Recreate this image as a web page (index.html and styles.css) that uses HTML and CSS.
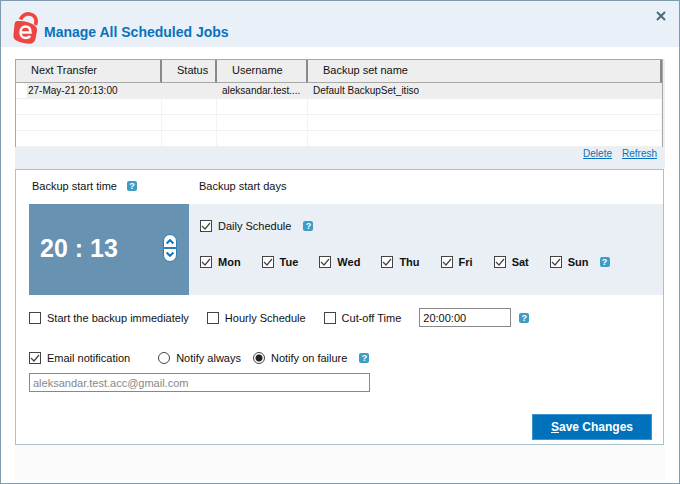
FILE: index.html
```html
<!DOCTYPE html>
<html lang="en">
<head>
  <meta charset="UTF-8">
  <meta name="viewport" content="width=device-width, initial-scale=1.0">
  <title>Manage All Scheduled Jobs</title>
  <link rel="stylesheet" href="styles.css">
</head>
<body>
  <div class="window">
    <header class="header">
      <svg class="logo" viewBox="0 0 26 33" aria-hidden="true">
        <path d="M7.5 8.5 C10 3.5 14 2.2 18 3.4 C22.5 5 24 9 22.5 14" fill="none" stroke="#ee4542" stroke-width="3.6"/>
        <path d="M4 10 C11 9.5 16 11 21 14 Q24.5 16 24 20 L22.5 28 Q21 33 16 32.8 C10 32.5 6 31 2.5 29 Q0 27.5 0.5 23.5 L1.5 13.5 Q2 10.2 4 10 Z" fill="#ee4542"/>
        <path d="M7.5 21.5 L17.5 21.5 C17.5 17.5 15.5 15.5 12.5 15.5 C9.5 15.5 7.5 18 7.5 21.2 C7.5 24.5 9.5 27 12.8 27 C14.8 27 16.2 26.4 17.2 25" fill="none" stroke="#fff" stroke-width="2.5"/>
      </svg>
      <h1>Manage All Scheduled Jobs</h1>
      <button class="close" type="button" aria-label="Close">
        <svg viewBox="0 0 10 10"><path d="M1 1 L9 9 M9 1 L1 9" stroke="#4c6b80" stroke-width="2"/></svg>
      </button>
    </header>

    <main class="content">
      <section class="jobs">
        <table>
          <thead>
            <tr>
              <th class="col-next">Next Transfer</th>
              <th class="col-status">Status</th>
              <th class="col-user">Username</th>
              <th>Backup set name</th>
            </tr>
          </thead>
          <tbody>
            <tr class="selected">
              <td>27-May-21 20:13:00</td>
              <td></td>
              <td>aleksandar.test....</td>
              <td>Default BackupSet_itiso</td>
            </tr>
            <tr><td></td><td></td><td></td><td></td></tr>
            <tr><td></td><td></td><td></td><td></td></tr>
            <tr><td></td><td></td><td></td><td></td></tr>
          </tbody>
        </table>
        <nav class="job-links">
          <a href="#delete">Delete</a>
          <a href="#refresh">Refresh</a>
        </nav>
      </section>

      <form class="panel">
        <div class="labels">
          <div class="label-time">Backup start time <button class="help" type="button">?</button></div>
          <div>Backup start days</div>
        </div>

        <div class="schedule">
          <div class="clock">
            <span class="time">20 : 13</span>
            <div class="spinner">
              <button type="button" aria-label="Later">
                <svg viewBox="0 0 12 12"><path d="M2 9 L6 5 L10 9" fill="none" stroke="#0a72bd" stroke-width="2.4"/></svg>
              </button>
              <button type="button" aria-label="Earlier">
                <svg viewBox="0 0 12 12"><path d="M2 3 L6 7 L10 3" fill="none" stroke="#0a72bd" stroke-width="2.4"/></svg>
              </button>
            </div>
          </div>
          <div class="days">
            <div class="row">
              <label><input type="checkbox" checked>Daily Schedule</label>
              <button class="help" type="button">?</button>
            </div>
            <div class="row weekdays">
              <label><input type="checkbox" checked>Mon</label>
              <label><input type="checkbox" checked>Tue</label>
              <label><input type="checkbox" checked>Wed</label>
              <label><input type="checkbox" checked>Thu</label>
              <label><input type="checkbox" checked>Fri</label>
              <label><input type="checkbox" checked>Sat</label>
              <label><input type="checkbox" checked>Sun</label>
              <button class="help" type="button">?</button>
            </div>
          </div>
        </div>

        <div class="row options">
          <label><input type="checkbox">Start the backup immediately</label>
          <label><input type="checkbox">Hourly Schedule</label>
          <label><input type="checkbox">Cut-off Time</label>
          <div class="cutoff">
            <input class="cutoff-time" type="text" value="20:00:00" aria-label="Cut-off Time">
            <button class="help" type="button">?</button>
          </div>
        </div>

        <div class="row notify">
          <label class="email-check"><input type="checkbox" checked>Email notification</label>
          <label><input type="radio" name="notify">Notify always</label>
          <label><input type="radio" name="notify" checked>Notify on failure</label>
          <button class="help" type="button">?</button>
        </div>
        <input class="email" type="text" value="aleksandar.test.acc@gmail.com" aria-label="Email address">

        <div class="actions">
          <button class="save" type="submit"><u>S</u>ave Changes</button>
        </div>
      </form>

      <footer class="footer"></footer>
    </main>
  </div>
</body>
</html>
```

FILE: styles.css
```css
:root {
  --frame: #7f9bae;
  --header-bg: #e9f0f7;
  --band-bg: #e9eff4;
  --line: #a9c0cd;
  --accent: #0a72bd;
  --help: #3d9cc8;
  --clock-bg: #6792b2;
}

* {
  box-sizing: border-box;
}

body {
  margin: 0;
  font-family: "Liberation Sans", Arial, sans-serif;
  font-size: 11px;
  line-height: 16px;
  color: #111;
  background: #fff;
}

button,
input {
  margin: 0;
  font: inherit;
  color: inherit;
}

button {
  padding: 0;
  border: 0;
  cursor: pointer;
}

.window {
  display: flex;
  flex-direction: column;
  min-height: 100vh;
  border: 1px solid var(--frame);
}

/* Header */
.header {
  display: flex;
  align-items: flex-start;
  gap: 5px;
  height: 46px;
  padding: 10px 13px 0 12px;
  background: var(--header-bg);
}

.logo {
  width: 26px;
  height: 33px;
}

h1 {
  flex: 1;
  margin: 13px 0 0;
  font-size: 14px;
  line-height: 16px;
  color: var(--accent);
}

.close {
  width: 10px;
  height: 10px;
  background: none;
}

.close svg,
.spinner svg {
  display: block;
}

.content {
  flex: 1;
  display: flex;
  flex-direction: column;
  padding: 12px 14px 3px;
}

/* Jobs table */
.jobs {
  background: var(--band-bg);
}

table {
  width: calc(100% - 2px);
  table-layout: fixed;
  border-spacing: 0;
  background: #fff;
  border: 1px solid #a8a8a8;
  border-bottom: 0;
}

th {
  height: 23px;
  padding: 0 0 2px 15px;
  font-weight: normal;
  text-align: left;
  background: #eee;
  border-right: 2px solid #8a8a8a;
  border-bottom: 1px solid #a8a8a8;
}

.col-next {
  width: 146px;
}

.col-status {
  width: 55px;
}

.col-user {
  width: 91px;
}

td {
  height: 16px;
  padding: 0 5px;
  font-size: 10px;
  line-height: 15px;
  overflow: hidden;
  white-space: nowrap;
  text-overflow: ellipsis;
  border-right: 1px solid #f3f3f3;
  border-bottom: 1px solid #f0f0f0;
}

td:first-child {
  padding-left: 12px;
}

.selected td {
  background: #eee;
  border-color: #eee;
}

.selected td:first-child {
  background: linear-gradient(to right, #fff 11px, #eee 11px);
}

.job-links {
  display: flex;
  justify-content: flex-end;
  gap: 10px;
  height: 22px;
  padding-right: 8px;
  font-size: 10px;
  line-height: 14px;
}

a {
  color: var(--accent);
}

/* Settings panel */
.panel {
  flex: 1;
  display: flex;
  flex-direction: column;
  margin-right: 1px;
  padding: 8px 0 4px 13px;
  border: 1px solid var(--line);
}

.labels {
  display: flex;
  padding-left: 3px;
}

.label-time {
  display: flex;
  align-items: center;
  gap: 10px;
  width: 167px;
}

.help {
  width: 10px;
  height: 10px;
  border-radius: 2px;
  background: var(--help);
  color: #fff;
  font-size: 9px;
  font-weight: bold;
  line-height: 10px;
}

.schedule {
  display: flex;
  height: 91px;
  margin-top: 10px;
}

.clock {
  display: flex;
  align-items: center;
  justify-content: space-between;
  width: 160px;
  padding: 0 12px 4px 11px;
  background: var(--clock-bg);
  color: #fff;
}

.time {
  font-size: 25px;
  font-weight: bold;
  line-height: 28px;
}

.spinner {
  display: flex;
  flex-direction: column;
}

.spinner button {
  width: 14px;
  height: 14px;
  padding: 1px;
  background: #fff;
  border: 1px solid #2f7db5;
  border-radius: 7px 7px 0 0;
}

.spinner button svg {
  width: 10px;
  height: 10px;
}

.spinner button:last-child {
  border-radius: 0 0 7px 7px;
}

.days {
  flex: 1;
  display: flex;
  flex-direction: column;
  gap: 20px;
  padding: 14px 0 0 11px;
  background: var(--band-bg);
}

.row {
  display: flex;
  align-items: center;
  gap: 12px;
}

.row label {
  display: flex;
  align-items: center;
  gap: 6px;
  white-space: nowrap;
}

.weekdays {
  gap: 21px;
  font-weight: bold;
}

.weekdays .help {
  margin-left: -10px;
}

input[type="checkbox"],
input[type="radio"] {
  appearance: none;
  width: 12px;
  height: 12px;
  background: #fff;
  border: 1px solid #444;
}

input[type="checkbox"]:checked {
  background: #fff url("data:image/svg+xml,%3Csvg xmlns='http://www.w3.org/2000/svg' viewBox='0 0 10 10'%3E%3Cpath d='M1 5 L4 8 L9 2' fill='none' stroke='%23444' stroke-width='1.2'/%3E%3C/svg%3E");
}

input[type="radio"] {
  border-radius: 50%;
}

input[type="radio"]:checked {
  background: radial-gradient(circle, #222 3px, #fff 4px);
}

.options {
  gap: 18px;
  margin-top: 13px;
}

.cutoff {
  display: flex;
  align-items: center;
  gap: 8px;
}

.cutoff-time,
.email {
  height: 19px;
  padding: 0 3px;
  border: 1px solid #888;
  background: #fff;
}

.cutoff-time {
  width: 92px;
}

.notify {
  margin-top: 23px;
}

.email-check {
  margin-right: 16px;
}

.email {
  width: 341px;
  margin-top: 7px;
  color: #888;
}

.actions {
  display: flex;
  justify-content: flex-end;
  margin-top: auto;
  padding-right: 11px;
}

.save {
  width: 120px;
  height: 26px;
  background: #0072bc;
  border: 1px solid #3f96cf;
  color: #fff;
  font-size: 12px;
  font-weight: bold;
}

.footer {
  height: 35px;
  background: #fafafa;
}
```
